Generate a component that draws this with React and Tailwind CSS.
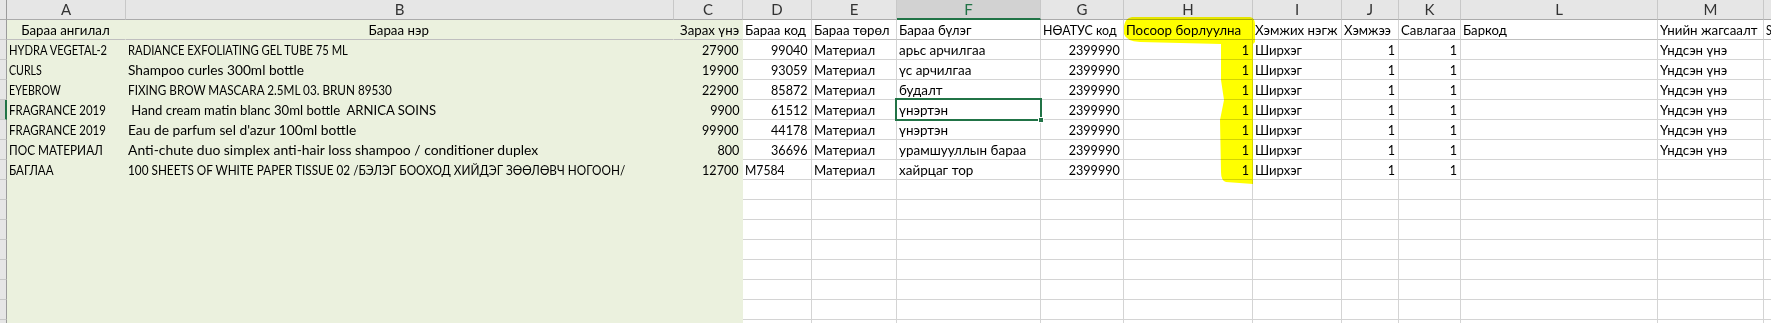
import React from "react";

const widths = [
  "w-[7px]",
  "w-[119px]",
  "w-[548px]",
  "w-[69px]",
  "w-[69px]",
  "w-[85px]",
  "w-[144px]",
  "w-[83px]",
  "w-[129px]",
  "w-[89px]",
  "w-[57px]",
  "w-[62px]",
  "w-[197px]",
  "w-[106px]",
  "w-[60px]",
];

const letters = ["", "A", "B", "C", "D", "E", "F", "G", "H", "I", "J", "K", "L", "M", "N"];

const titles = [
  "Бараа ангилал",
  "Бараа нэр",
  "Зарах үнэ",
  "Бараа код",
  "Бараа төрөл",
  "Бараа бүлэг",
  "НӨАТУС код",
  "Посоор борлуулна",
  "Хэмжих нэгж",
  "Хэмжээ",
  "Савлагаа",
  "Баркод",
  "Үнийн жагсаалт",
  "SKU",
];
const titleAlign = ["center", "center", "right"];

const rows = [
  ["HYDRA VEGETAL-2", "RADIANCE EXFOLIATING GEL TUBE 75 ML", "27900", "99040", "Материал", "арьс арчилгаа", "2399990", "1", "Ширхэг", "1", "1", "", "Үндсэн үнэ", ""],
  ["CURLS", "Shampoo curles 300ml bottle", "19900", "93059", "Материал", "үс арчилгаа", "2399990", "1", "Ширхэг", "1", "1", "", "Үндсэн үнэ", ""],
  ["EYEBROW", "FIXING BROW MASCARA 2.5ML 03. BRUN 89530", "22900", "85872", "Материал", "будалт", "2399990", "1", "Ширхэг", "1", "1", "", "Үндсэн үнэ", ""],
  ["FRAGRANCE 2019", " Hand cream matin blanc 30ml bottle  ARNICA SOINS", "9900", "61512", "Материал", "үнэртэн", "2399990", "1", "Ширхэг", "1", "1", "", "Үндсэн үнэ", ""],
  ["FRAGRANCE 2019", "Eau de parfum sel d'azur 100ml bottle", "99900", "44178", "Материал", "үнэртэн", "2399990", "1", "Ширхэг", "1", "1", "", "Үндсэн үнэ", ""],
  ["ПОС МАТЕРИАЛ", "Anti-chute duo simplex anti-hair loss shampoo / conditioner duplex", "800", "36696", "Материал", "урамшууллын бараа", "2399990", "1", "Ширхэг", "1", "1", "", "Үндсэн үнэ", ""],
  ["БАГЛАА", "100 SHEETS OF WHITE PAPER TISSUE 02 /БЭЛЭГ БООХОД ХИЙДЭГ ЗӨӨЛӨВЧ НОГООН/", "12700", "M7584", "Материал", "хайрцаг тор", "2399990", "1", "Ширхэг", "1", "1", "", "", ""],
];

const emptyRow = Array(14).fill("");

// Lato is wider than Calibri, mostly in capitals and digits: narrow each text a little
function squeeze(s) {
  let sum = 0;
  let n = 0;
  for (const ch of s) {
    let f = 0.95;
    if (/[A-Z]/.test(ch)) f = 0.76;
    else if (/[А-ЯЁӨҮ]/.test(ch)) f = 0.83;
    else if (/[0-9]/.test(ch)) f = 0.9;
    else if (/[a-z ]/.test(ch)) f = 1;
    else if (/[а-яёөү]/.test(ch)) f = 0.96;
    sum += f;
    n += 1;
  }
  return n ? sum / n : 1;
}

const origins = { left: "origin-left", right: "origin-right", center: "origin-center" };
const aligns = { left: "text-left", right: "text-right", center: "text-center" };

function RowHeader({ n, selected }) {
  return (
    <div
      className={`${widths[0]} h-full shrink-0 overflow-hidden border-b border-b-[#c8c8c8] ${
        selected ? "bg-[#d2d2d2] border-r-2 border-r-[#217346]" : "bg-[#e6e6e6] border-r border-r-[#9b9b9b]"
      }`}
    >
      <div className="w-[30px] -ml-[23px] text-center text-[#2e75d6] leading-[19px]">{n}</div>
    </div>
  );
}

function Cell({ col, value, align, green, title }) {
  const bg = green ? "bg-[#ebf1de]" : "bg-white";
  const borderR = green ? "border-r-[#ebf1de]" : "border-r-[#d4d4d4]";
  const borderB = title ? "border-b-[#bfbfbf]" : green ? "border-b-[#ebf1de]" : "border-b-[#d4d4d4]";
  return (
    <div
      className={`${widths[col]} ${bg} ${borderR} ${borderB} ${aligns[align]} h-full shrink-0 border-r border-b pl-[2px] pr-[3px] leading-[19px] whitespace-pre overflow-hidden text-black`}
    >
      {value && (
        <span
          className={`inline-block ${origins[align]}`}
          style={{ transform: `scaleX(${squeeze(value)})` }}
        >
          {value}
        </span>
      )}
    </div>
  );
}

function isNum(v) {
  return /^\d+$/.test(v);
}

export default function App() {
  const allRows = [...rows, ...Array(8).fill(emptyRow)];
  return (
    <div
      className="relative w-[1771px] h-[323px] overflow-hidden bg-white text-[14px]"
      style={{ fontFamily: 'Lato, "Noto Sans", sans-serif' }}
    >
      {/* column letters */}
      <div className="flex h-[20px]">
        {letters.map((l, i) => (
          <div
            key={i}
            className={`${widths[i]} h-full shrink-0 text-center text-[15px] leading-[19px] border-r ${
              i === 0 ? "border-r-[#9b9b9b]" : "border-r-[#c8c8c8]"
            } ${
              l === "F"
                ? "bg-[#d2d2d2] text-[#217346] border-b-2 border-b-[#217346]"
                : "bg-[#e6e6e6] text-[#333333] border-b border-b-[#ababab]"
            }`}
          >
            {l === "N" ? "" : l}
          </div>
        ))}
      </div>

      {/* title row */}
      <div className="flex h-[20px]">
        <RowHeader n={1} />
        {titles.map((t, i) => (
          <Cell key={i} col={i + 1} value={t} title green={i < 3} align={titleAlign[i] || "left"} />
        ))}
      </div>

      {/* data rows */}
      {allRows.map((r, ri) => (
        <div key={ri} className="flex h-[20px]">
          <RowHeader n={ri + 2} selected={ri === 3} />
          {r.map((v, ci) => (
            <Cell key={ci} col={ci + 1} value={v} green={ci < 3} align={isNum(v) ? "right" : "left"} />
          ))}
        </div>
      ))}

      {/* active cell F5 */}
      <div className="absolute z-10 left-[895px] top-[98px] w-[147px] h-[23px] border-2 border-[#217346]" />
      <div className="absolute z-20 left-[1038px] top-[117px] w-[6px] h-[6px] bg-[#217346] border border-white" />

      {/* highlighter marks */}
      <svg
        className="absolute z-30 left-0 top-0 pointer-events-none mix-blend-multiply"
        width="1771"
        height="323"
        viewBox="0 0 1771 323"
      >
        <path
          d="M1124,26 Q1125,18 1132,17 L1250,17 Q1255,18 1255,24 L1255,42 L1253,44 L1253,184 L1226,182 Q1221,181 1221,172 L1220,120 L1224,100 L1221,80 L1221,44 L1140,42 Q1126,41 1124,34 Z"
          fill="#ffff00"
        />
      </svg>
    </div>
  );
}
